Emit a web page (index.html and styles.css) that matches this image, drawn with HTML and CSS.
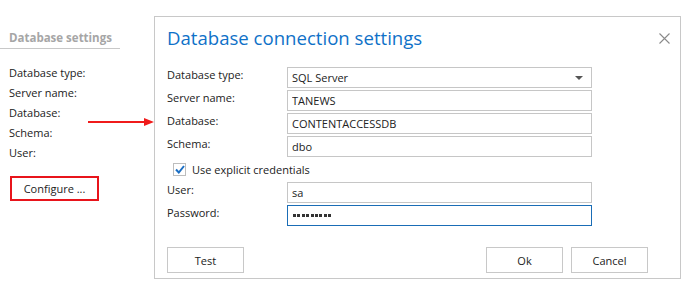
FILE: index.html
```html
<!DOCTYPE html>
<html lang="en">
<head>
    <meta charset="UTF-8">
    <title>Database connection settings</title>
    <link rel="stylesheet" href="styles.css">
</head>
<body>

<div class="page">
    <!-- Left settings panel -->
    <aside class="side">
        <h2 class="side-title">Database settings</h2>
        <ul class="side-list">
            <li>Database type:</li>
            <li>Server name:</li>
            <li>Database:</li>
            <li>Schema:</li>
            <li>User:</li>
        </ul>
        <div class="highlight">
            <button class="btn side-btn">Configure ...</button>
        </div>
        <div class="arrow"><span class="arrow-line"></span><span class="arrow-head"></span></div>
    </aside>

    <!-- Dialog -->
    <section class="dialog">
        <div class="dialog-head">
            <h1>Database connection settings</h1>
            <svg class="close" width="11" height="11" viewBox="0 0 11 11">
                <path d="M0.5 0.5 L10.5 10.5 M10.5 0.5 L0.5 10.5" stroke="#8a8a8a" stroke-width="1.1" fill="none"/>
            </svg>
        </div>

        <div class="form">
            <label>Database type:</label>
            <div class="field select">SQL Server<span class="caret"></span></div>

            <label>Server name:</label>
            <input class="field" type="text" value="TANEWS">

            <label>Database:</label>
            <input class="field" type="text" value="CONTENTACCESSDB">

            <label>Schema:</label>
            <input class="field" type="text" value="dbo">

            <div class="check-row">
                <span class="checkbox">
                    <svg width="10" height="9" viewBox="0 0 10 9">
                        <path d="M1 4.5 L3.8 7.5 L9 1" stroke="#1b6fc4" stroke-width="2" fill="none"/>
                    </svg>
                </span>
                Use explicit credentials
            </div>

            <label>User:</label>
            <input class="field" type="text" value="sa">

            <label>Password:</label>
            <div class="field active"><span class="dots"></span><span class="dots"></span><span class="dots"></span><span class="dots"></span><span class="dots"></span><span class="dots"></span><span class="dots"></span><span class="dots"></span><span class="dots"></span></div>
        </div>

        <div class="actions">
            <button class="btn">Test</button>
            <div class="actions-right">
                <button class="btn">Ok</button>
                <button class="btn">Cancel</button>
            </div>
        </div>
    </section>
</div>

</body>
</html>
```

FILE: styles.css
```css
/* Common */
* {
    margin: 0;
    padding: 0;
    box-sizing: border-box;
}

body {
    font-family: 'Open Sans', 'Noto Sans', sans-serif;
    font-size: 11px;
    color: #222;
    background: #fff;
}

.page {
    display: flex;
    width: 687px;
    height: 288px;
}

/* Buttons */
.btn {
    width: 77px;
    height: 26px;
    border: 1px solid #c8c8c8;
    background: #fff;
    font-family: inherit;
    font-size: 11px;
    color: #222;
    cursor: pointer;
}

/* Left panel */
.side {
    position: relative;
    width: 154px;
    flex-shrink: 0;
}

.side-title {
    width: 120px;
    padding: 30px 0 2px 9px;
    font-size: 11.5px;
    font-weight: bold;
    line-height: 16px;
    color: #a6a6a6;
    border-bottom: 1px solid #c8c8c8;
}

.side-list {
    list-style: none;
    margin-top: 14px;
    padding-left: 9px;
}

.side-list li {
    line-height: 20px;
}

.highlight {
    display: inline-block;
    margin: 13px 0 0 10px;
    border: 2px solid #e8141b;
}

.highlight .side-btn {
    display: block;
    width: 85px;
    height: 21px;
    border: none;
}

.arrow {
    position: absolute;
    left: 88px;
    top: 118px;
    display: flex;
    align-items: center;
}

.arrow-line {
    width: 56px;
    height: 2px;
    background: #f01b1b;
}

.arrow-head {
    width: 0;
    height: 0;
    border-left: 10px solid #f01b1b;
    border-top: 4px solid transparent;
    border-bottom: 4px solid transparent;
}

/* Dialog */
.dialog {
    margin-top: 16px;
    width: 527px;
    height: 263px;
    border: 1px solid #c8c8c8;
    padding: 0 0 0 12px;
    display: flex;
    flex-direction: column;
}

.dialog-head {
    display: flex;
    justify-content: space-between;
    align-items: flex-start;
    padding-right: 10px;
}

.dialog-head h1 {
    font-weight: normal;
    font-size: 18.6px;
    line-height: 24px;
    color: #0f71c8;
    margin-top: 9px;
}

.close {
    margin-top: 16px;
}

.form {
    display: grid;
    grid-template-columns: 120px 305px;
    grid-auto-rows: 21px;
    row-gap: 2px;
    margin-top: 17px;
}

.form label {
    line-height: 16px;
}

.field {
    display: flex;
    align-items: center;
    height: 21px;
    padding: 0 4px;
    border: 1px solid #c6c6c6;
    font-family: inherit;
    font-size: 11px;
    color: #222;
    background: #fff;
    outline: none;
}

.field.active {
    border-color: #1a6db6;
    gap: 1.4px;
    padding-left: 5px;
}

.dots {
    width: 3px;
    height: 3px;
    background: #333;
}

.select {
    justify-content: space-between;
}

.caret {
    width: 0;
    height: 0;
    margin-right: 4px;
    border-top: 4px solid #555;
    border-left: 4px solid transparent;
    border-right: 4px solid transparent;
}

.check-row {
    grid-column: 1 / 3;
    display: flex;
    align-items: center;
    gap: 6px;
    padding-left: 6px;
}

.checkbox {
    display: flex;
    align-items: center;
    justify-content: center;
    width: 13px;
    height: 13px;
    border: 1px solid #bdbdbd;
    background: #fff;
}

.actions {
    display: flex;
    justify-content: space-between;
    width: 481px;
    margin-top: 21px;
}

.actions-right {
    display: flex;
    gap: 8px;
}
```
